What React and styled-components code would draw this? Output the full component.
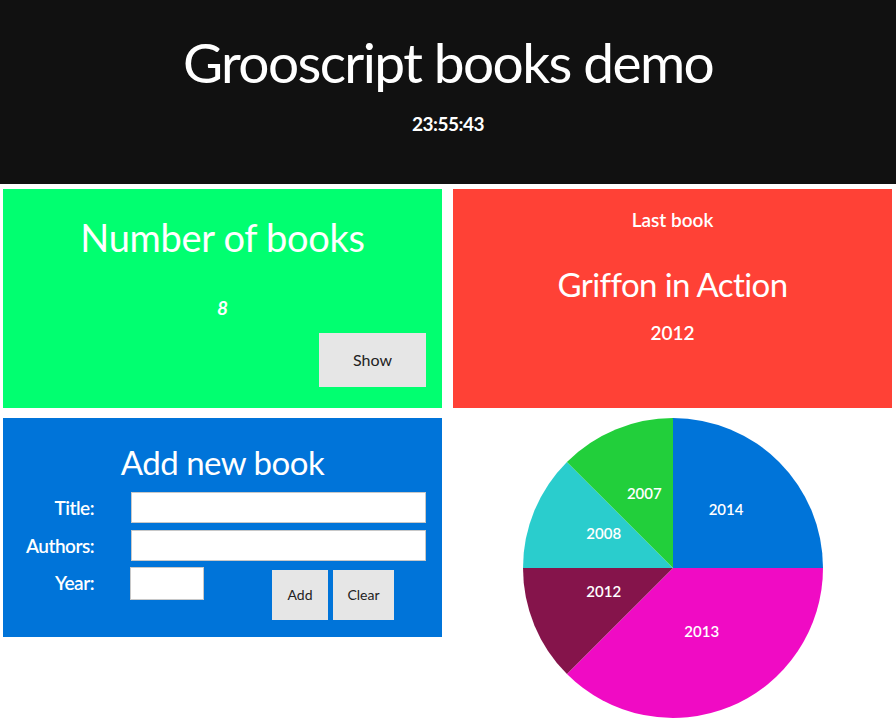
import React from "react";
import styled, { createGlobalStyle } from "styled-components";

const Global = createGlobalStyle`
  html, body { margin: 0; padding: 0; background: #fff; }
  body { font-family: Lato, "Open Sans", sans-serif; color: #fff; }
  * { box-sizing: border-box; }
`;

const Header = styled.header`
  background: #111111;
  height: 184px;
  display: flex;
  flex-direction: column;
  align-items: center;
  padding-top: 27px;
`;

const Title = styled.h1`
  margin: 0;
  font-size: 55px;
  font-weight: 400;
  line-height: 70px;
  letter-spacing: -1.6px;
`;

const Clock = styled.div`
  margin-top: 15px;
  font-size: 19px;
  font-weight: 700;
  letter-spacing: -0.5px;
`;

const Grid = styled.main`
  display: grid;
  grid-template-columns: 439px 439px;
  grid-template-rows: 219px auto;
  column-gap: 11px;
  row-gap: 10px;
  padding: 5px 4px 7px 3px;
`;

const Panel = styled.section`
  background: ${(p) => p.$bg};
  height: 219px;
  display: flex;
  flex-direction: column;
  align-items: center;
`;

const BigHeading = styled.h2`
  margin: ${(p) => p.$m || "0"};
  font-size: ${(p) => p.$size || "36px"};
  font-weight: 400;
  line-height: 1.2;
  letter-spacing: ${(p) => p.$ls || "-0.3px"};
`;

const Count = styled.div`
  margin-top: 35px;
  font-size: 19px;
  font-style: italic;
  font-weight: 700;
`;

const Small = styled.div`
  margin: ${(p) => p.$m || "0"};
  font-size: 19px;
  font-weight: 600;
  line-height: 1.2;
`;

const GreyButton = styled.button`
  background: #e6e6e6;
  border: none;
  color: #222;
  font-family: Lato, sans-serif;
  font-size: ${(p) => p.$fs || "16px"};
  width: ${(p) => p.$w};
  height: ${(p) => p.$h};
  padding: 0;
  cursor: pointer;
`;

const ShowRow = styled.div`
  align-self: stretch;
  display: flex;
  justify-content: flex-end;
  padding-right: 16px;
  margin-top: 14px;
`;

const Form = styled.div`
  align-self: stretch;
  display: grid;
  grid-template-columns: 91px 1fr;
  column-gap: 37px;
  row-gap: 7px;
  padding: 0 16px 0 0;
  margin-top: 9px;
`;

const Label = styled.label`
  text-align: right;
  font-size: 19px;
  font-weight: 600;
  letter-spacing: -0.5px;
  align-self: ${(p) => (p.$top ? "start" : "center")};
  margin-top: ${(p) => (p.$top ? "3px" : "0")};
`;

const TextInput = styled.input`
  border: 1px solid #c8c8c8;
  height: ${(p) => p.$h || "31px"};
  width: ${(p) => p.$w || "100%"};
  background: #fff;
`;

const YearRow = styled.div`
  display: flex;
  align-items: flex-start;
  margin-left: -1px;
  margin-top: -1px;
`;

const Buttons = styled.div`
  display: flex;
  gap: 5px;
  margin-left: 68px;
  margin-top: 3px;
`;

const PieCell = styled.div`
  display: flex;
  justify-content: center;
  align-items: flex-start;
  height: 300px;
`;

const PieSvg = styled.svg`
  display: block;
  flex-shrink: 0;
  overflow: visible;
`;

const data = [
  { year: "2014", n: 2, color: "#0074D9" },
  { year: "2013", n: 3, color: "#F00BC4" },
  { year: "2012", n: 1, color: "#85144B" },
  { year: "2008", n: 1, color: "#2ACDCD" },
  { year: "2007", n: 1, color: "#22CF3B" },
];

function Pie() {
  const r = 150;
  const cx = 150;
  const cy = 150;
  const total = data.reduce((s, d) => s + d.n, 0);
  let a = 0;
  const pt = (ang, rad) => [cx + rad * Math.sin(ang), cy - rad * Math.cos(ang)];
  return (
    <PieSvg width="300" height="300" viewBox="0 0 300 300">
      {data.map((d) => {
        const a0 = a;
        const a1 = a + (d.n / total) * Math.PI * 2;
        a = a1;
        const [x0, y0] = pt(a0, r);
        const [x1, y1] = pt(a1, r);
        const large = a1 - a0 > Math.PI ? 1 : 0;
        const [lx, ly] = pt((a0 + a1) / 2, 75);
        return (
          <g key={d.year}>
            <path
              d={`M${cx},${cy} L${x0},${y0} A${r},${r} 0 ${large} 1 ${x1},${y1} Z`}
              fill={d.color}
            />
            <text
              x={lx}
              y={ly}
              textAnchor="middle"
              fill="#fff"
              fontFamily="Lato, sans-serif"
              fontWeight="600"
              fontSize="15"
            >
              {d.year}
            </text>
          </g>
        );
      })}
    </PieSvg>
  );
}

export default function App() {
  return (
    <>
      <Global />
      <Header>
        <Title>Grooscript books demo</Title>
        <Clock>23:55:43</Clock>
      </Header>
      <Grid>
        <Panel $bg="#01FF70">
          <BigHeading $m="26px 0 0" $size="38px">Number of books</BigHeading>
          <Count>8</Count>
          <ShowRow>
            <GreyButton $w="107px" $h="54px">Show</GreyButton>
          </ShowRow>
        </Panel>
        <Panel $bg="#FF4136">
          <Small $m="20px 0 0">Last book</Small>
          <BigHeading $m="33px 0 0" $size="33px" $ls="-0.6px">Griffon in Action</BigHeading>
          <Small $m="18px 0 0">2012</Small>
        </Panel>
        <Panel $bg="#0074D9">
          <BigHeading $m="25px 0 0" $size="33px" $ls="-0.5px">Add new book</BigHeading>
          <Form>
            <Label>Title:</Label>
            <TextInput type="text" />
            <Label>Authors:</Label>
            <TextInput type="text" />
            <Label $top>Year:</Label>
            <YearRow>
              <TextInput type="text" $w="74px" $h="33px" />
              <Buttons>
                <GreyButton $w="56px" $h="50px" $fs="14px">Add</GreyButton>
                <GreyButton $w="61px" $h="50px" $fs="14px">Clear</GreyButton>
              </Buttons>
            </YearRow>
          </Form>
        </Panel>
        <PieCell>
          <Pie />
        </PieCell>
      </Grid>
    </>
  );
}
